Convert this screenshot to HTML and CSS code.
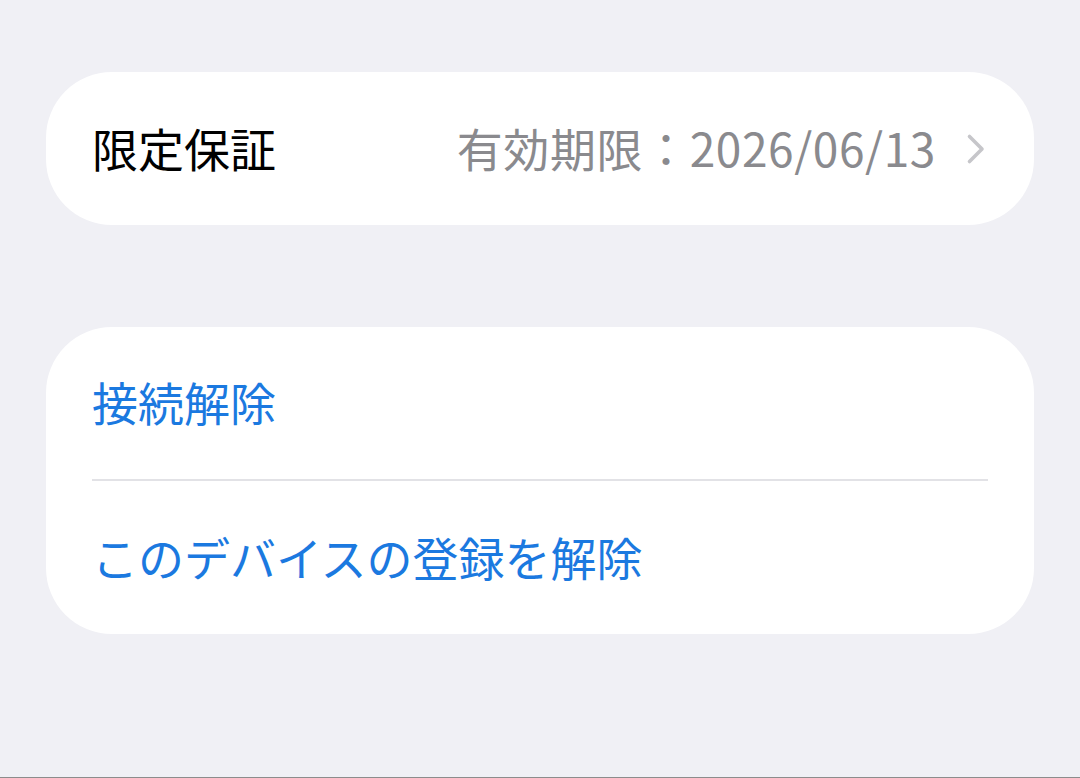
FILE: index.html
```html
<!DOCTYPE html>
<html lang="ja">
<head>
    <meta charset="UTF-8">
    <meta name="viewport" content="width=device-width, initial-scale=1.0">
    <title>保証</title>
    <link rel="stylesheet" href="styles.css">
</head>
<body>
    <div class="screen">
        <div class="group">
            <div class="row row-link">
                <span class="label">限定保証</span>
                <span class="value">有効期限：2026/06/13</span>
                <svg class="chevron" width="20" height="32" viewBox="0 0 20 32">
                    <path d="M3.5 3.5 L16 16 L3.5 28.5" fill="none" stroke="#c6c6ca" stroke-width="3.6" stroke-linecap="round" stroke-linejoin="round"/>
                </svg>
            </div>
        </div>

        <div class="group group-actions">
            <div class="row action">接続解除</div>
            <div class="row action">このデバイスの登録を解除</div>
        </div>
    </div>
</body>
</html>
```

FILE: styles.css
```css
body {
    margin: 0;
    padding: 0;
    background-color: #f0f0f5;
    font-family: "Noto Sans CJK JP", "Noto Sans", sans-serif;
}
.screen {
    height: 778px;
    box-sizing: border-box;
    padding: 72px 46px 0 46px;
    border-bottom: 1px solid #8c8c8c;
}
.group {
    background-color: #ffffff;
    border-radius: 66px;
    padding: 0 46px;
}
.group-actions {
    margin-top: 102px;
}
.row {
    display: flex;
    align-items: center;
    font-size: 46px;
    line-height: 1;
}
.row-link {
    height: 153px;
}
.label {
    color: #000000;
    flex: 1;
    margin-top: -4px;
}
.value {
    color: #8a8a8e;
    letter-spacing: 0.6px;
    margin-top: -4px;
}
.chevron {
    margin-left: 30px;
    margin-right: 2px;
}
.action {
    color: #1b79e0;
    height: 152px;
    padding-bottom: 4px;
    box-sizing: border-box;
}
.action + .action {
    border-top: 2px solid #e2e2e6;
    height: 155px;
}
```
